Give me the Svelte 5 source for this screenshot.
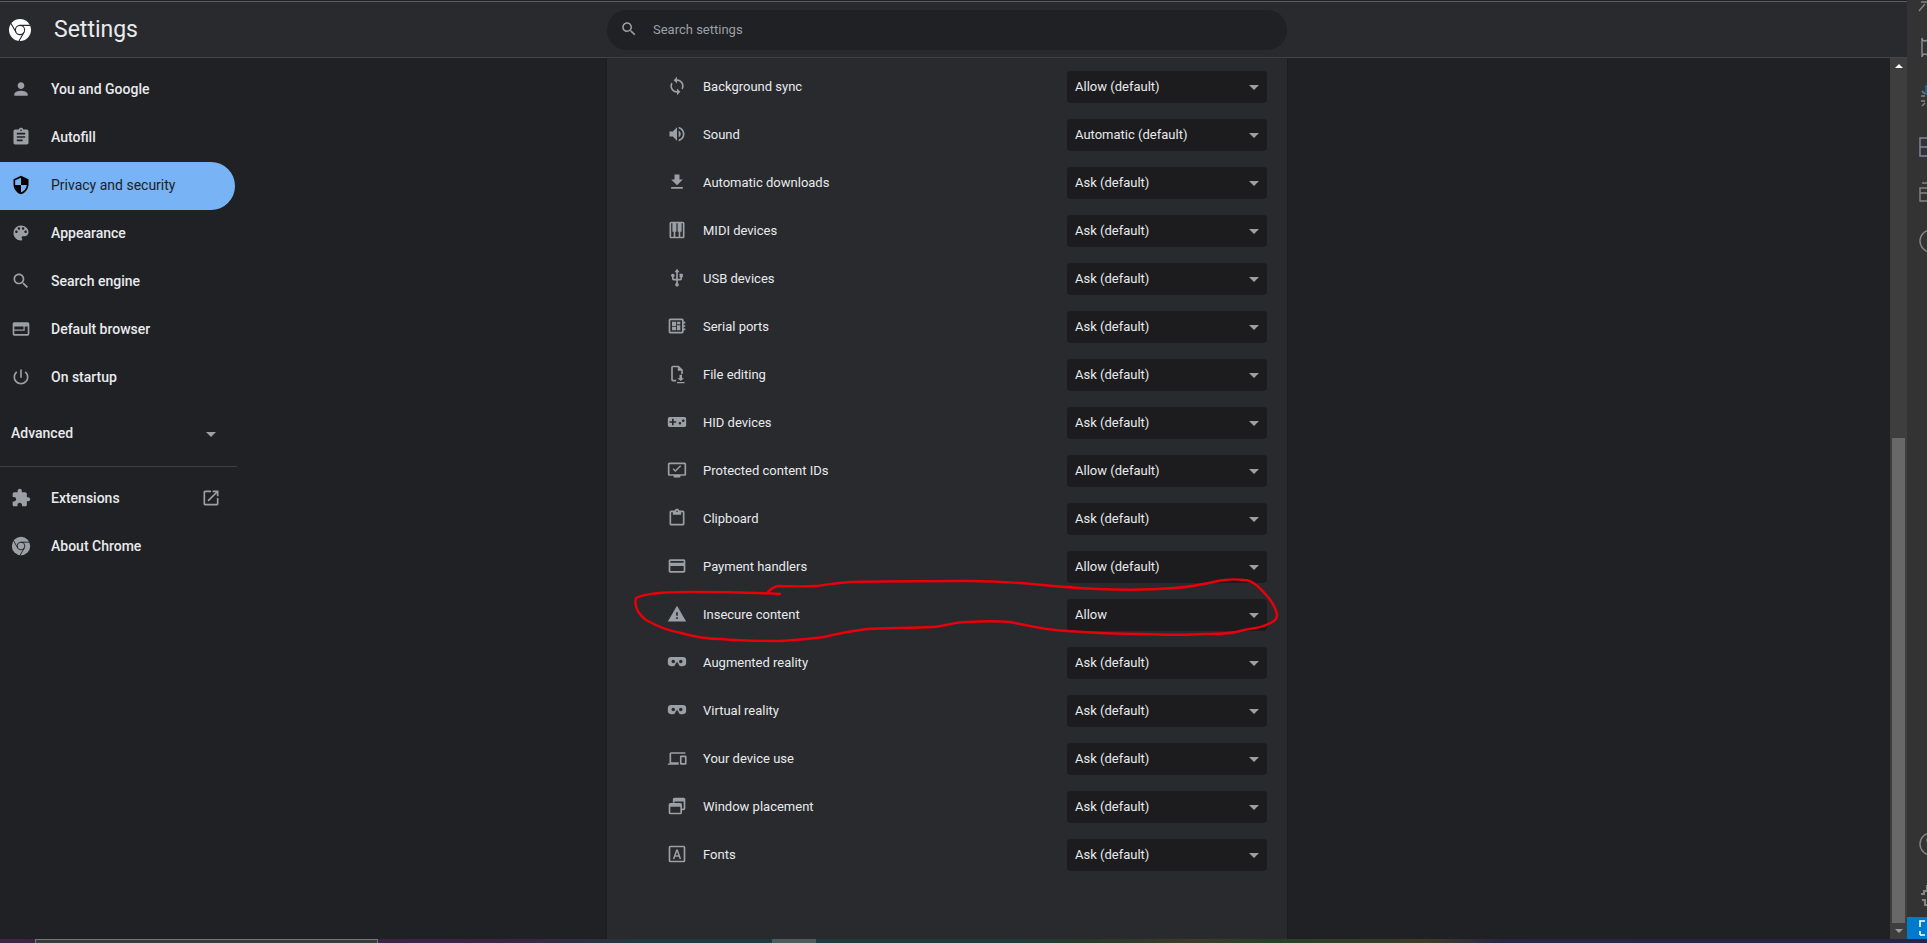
<script lang="ts">
	const paths: Record<string, string> = {
		person: 'M12 12c2.21 0 4-1.79 4-4s-1.79-4-4-4-4 1.79-4 4 1.79 4 4 4zm0 2c-2.67 0-8 1.34-8 4v2h16v-2c0-2.66-5.33-4-8-4z',
		assignment: 'M19 3h-4.18C14.4 1.84 13.3 1 12 1c-1.3 0-2.4.84-2.82 2H5c-1.1 0-2 .9-2 2v14c0 1.1.9 2 2 2h14c1.1 0 2-.9 2-2V5c0-1.1-.9-2-2-2zm-7 0c.55 0 1 .45 1 1s-.45 1-1 1-1-.45-1-1 .45-1 1-1zm2 14H7v-2h7v2zm3-4H7v-2h10v2zm0-4H7V7h10v2z',
		security: 'M12 1L3 5v6c0 5.55 3.84 10.74 9 12 5.16-1.26 9-6.45 9-12V5l-9-4zm0 10.99h7c-.53 4.12-3.28 7.79-7 8.94V12H5V6.3l7-3.11v8.8z',
		palette: 'M12 3c-4.97 0-9 4.03-9 9s4.03 9 9 9c.83 0 1.5-.67 1.5-1.5 0-.39-.15-.74-.39-1.01-.23-.26-.38-.61-.38-.99 0-.83.67-1.5 1.5-1.5H16c2.76 0 5-2.24 5-5 0-4.42-4.03-8-9-8zm-5.5 9c-.83 0-1.5-.67-1.5-1.5S5.67 9 6.5 9 8 9.67 8 10.5 7.33 12 6.5 12zm3-4C8.67 8 8 7.33 8 6.5S8.67 5 9.5 5s1.5.67 1.5 1.5S10.33 8 9.5 8zm5 0c-.83 0-1.5-.67-1.5-1.5S13.67 5 14.5 5s1.5.67 1.5 1.5S15.33 8 14.5 8zm3 4c-.83 0-1.5-.67-1.5-1.5S16.67 9 17.5 9s1.5.67 1.5 1.5-.67 1.5-1.5 1.5z',
		search: 'M15.5 14h-.79l-.28-.27C15.41 12.59 16 11.11 16 9.5 16 5.91 13.09 3 9.5 3S3 5.91 3 9.5 5.91 16 9.5 16c1.61 0 3.09-.59 4.23-1.57l.27.28v.79l5 4.99L20.49 19l-4.99-5zm-6 0C7.01 14 5 11.99 5 9.5S7.01 5 9.5 5 14 7.01 14 9.5 11.99 14 9.5 14z',
		web: 'M4 4h16a2 2 0 012 2v12a2 2 0 01-2 2H4a2 2 0 01-2-2V6a2 2 0 012-2zm0 5v9h16V9zm0 3.5h11V9h1.5v5H4z',
		power: 'M13 3h-2v10h2V3zm4.83 2.17l-1.42 1.42C17.99 7.86 19 9.81 19 12c0 3.87-3.13 7-7 7s-7-3.13-7-7c0-2.19 1.01-4.14 2.58-5.42L6.17 5.17C4.23 6.82 3 9.26 3 12c0 4.97 4.03 9 9 9s9-4.03 9-9c0-2.74-1.23-5.18-3.17-6.83z',
		extension: 'M20.5 11H19V7c0-1.1-.9-2-2-2h-4V3.5C13 2.12 11.88 1 10.5 1S8 2.12 8 3.5V5H4c-1.1 0-1.99.9-1.99 2v3.8H3.5c1.49 0 2.7 1.21 2.7 2.7s-1.21 2.7-2.7 2.7H2V20c0 1.1.9 2 2 2h3.8v-1.5c0-1.49 1.21-2.7 2.7-2.7 1.49 0 2.7 1.21 2.7 2.7V22H17c1.1 0 2-.9 2-2v-4h1.5c1.38 0 2.5-1.12 2.5-2.5S21.88 11 20.5 11z',
		open: 'M19 19H5V5h7V3H5c-1.11 0-2 .9-2 2v14c0 1.1.89 2 2 2h14c1.1 0 2-.9 2-2v-7h-2v7zM14 3v2h3.59l-9.83 9.83 1.41 1.41L19 6.41V10h2V3h-7z',
		sync: 'M12 4V1L8 5l4 4V6c3.31 0 6 2.69 6 6 0 1.01-.25 1.97-.7 2.8l1.46 1.46C19.54 15.03 20 13.57 20 12c0-4.42-3.58-8-8-8zm0 14c-3.31 0-6-2.69-6-6 0-1.01.25-1.97.7-2.8L5.24 7.74C4.46 8.97 4 10.43 4 12c0 4.42 3.58 8 8 8v3l4-4-4-4v3z',
		sound: 'M3 9v6h4l5 5V4L7 9H3zm13.5 3c0-1.77-1.02-3.29-2.5-4.03v8.05c1.48-.73 2.5-2.25 2.5-4.02zM14 3.23v2.06c2.89.86 5 3.54 5 6.71s-2.11 5.85-5 6.71v2.06c4.01-.91 7-4.49 7-8.77s-2.99-7.86-7-8.77z',
		download: 'M19 9h-4V3H9v6H5l7 7 7-7zM5 18v2h14v-2H5z',
		piano: 'M19 2H5c-1.1 0-2 .9-2 2v16c0 1.1.9 2 2 2h14c1.1 0 2-.9 2-2V4c0-1.1-.9-2-2-2zM8 20H5V4h1.5v10H8v6zm6 0h-4v-6h1.25V4h1.5v10H14v6zm5 0h-3v-6h1.5V4H19v16z',
		usb: 'M15 7v4h1v2h-3V5h2l-3-4-3 4h2v8H8v-2.07c.7-.37 1.2-1.08 1.2-1.93 0-1.21-.99-2.2-2.2-2.2-1.21 0-2.2.99-2.2 2.2 0 .85.5 1.56 1.2 1.93V13c0 1.11.89 2 2 2h3v3.05c-.71.37-1.2 1.1-1.2 1.95 0 1.22.99 2.2 2.2 2.2 1.21 0 2.2-.98 2.2-2.2 0-.85-.49-1.58-1.2-1.95V15h3c1.11 0 2-.89 2-2v-2h1V7h-4z',
		serial: 'M22 9V7h-2V5c0-1.1-.9-2-2-2H4c-1.1 0-2 .9-2 2v14c0 1.1.9 2 2 2h14c1.1 0 2-.9 2-2v-2h2v-2h-2v-2h2v-2h-2V9h2zm-4 10H4V5h14v14zM6 13h5v4H6zm6-6h4v3h-4zM6 7h5v5H6zm6 4h4v6h-4z',
		file: 'M7 2h7l5 5v5h-2V8h-4V4H7v15h4v2H7a2 2 0 01-2-2V4a2 2 0 012-2zM15 13h3v4h2.5L16.5 20.5 12.5 17H15zM12 21.5h9V23h-9z',
		gamepad: 'M21 6H3c-1.1 0-2 .9-2 2v8c0 1.1.9 2 2 2h18c1.1 0 2-.9 2-2V8c0-1.1-.9-2-2-2zm-10 7H8v3H6v-3H3v-2h3V8h2v3h3v2zm4.5 2c-.83 0-1.5-.67-1.5-1.5s.67-1.5 1.5-1.5 1.5.67 1.5 1.5-.67 1.5-1.5 1.5zm4-3c-.83 0-1.5-.67-1.5-1.5S18.67 9 19.5 9s1.5.67 1.5 1.5-.67 1.5-1.5 1.5z',
		protected: 'M21 3H3c-1.1 0-2 .9-2 2v12c0 1.1.9 2 2 2h5v2h8v-2h5c1.1 0 2-.9 2-2V5c0-1.1-.9-2-2-2zm0 14H3V5h18v12zM10 14.4l-3.2-3.2 1.2-1.2 2 2 5.8-5.8 1.2 1.2z',
		clipboard: 'M19 3h-4.18C14.4 1.84 13.3 1 12 1s-2.4.84-2.82 2H5c-1.1 0-2 .9-2 2v14c0 1.1.9 2 2 2h14c1.1 0 2-.9 2-2V5c0-1.1-.9-2-2-2zm-7 0c.55 0 1 .45 1 1s-.45 1-1 1-1-.45-1-1 .45-1 1-1zm7 16H5V5h2v3h10V5h2v14z',
		card: 'M20 4H4c-1.11 0-1.99.89-1.99 2L2 18c0 1.11.89 2 2 2h16c1.11 0 2-.89 2-2V6c0-1.11-.89-2-2-2zm0 14H4v-6h16v6zm0-10H4V6h16v2z',
		warning: 'M1 21h22L12 2 1 21zm12-3h-2v-2h2v2zm0-4h-2v-4h2v4z',
		vr: 'M5 6h14a4 4 0 014 4v3a4 4 0 01-4 4h-2.6c-1 0-1.7-.6-2.1-1.4l-1.1-2.4c-.2-.5-.6-.8-1.2-.8s-1 .3-1.2.8l-1.1 2.4c-.4.8-1.1 1.4-2.1 1.4H5a4 4 0 01-4-4v-3a4 4 0 014-4zm2.5 3.4a2.1 2.1 0 100 4.2 2.1 2.1 0 000-4.2zm9 0a2.1 2.1 0 100 4.2 2.1 2.1 0 000-4.2z',
		devices: 'M5 5h17v2H5v10h9v3H1v-1.5h2V7a2 2 0 012-2zM17 9h5a1.5 1.5 0 011.5 1.5v8a1.5 1.5 0 01-1.5 1.5h-5a1.5 1.5 0 01-1.5-1.5v-8A1.5 1.5 0 0117 9zm.5 2v7h4v-7z',
		windows: 'M9 2h11a2 2 0 012 2v11a2 2 0 01-2 2h-2v-2h2V6.5H9V8H7V4a2 2 0 012-2zM4 8.5h12a2 2 0 012 2V20a2 2 0 01-2 2H4a2 2 0 01-2-2v-9.5a2 2 0 012-2zm0 4.5v7h12v-7z',
		fonts: 'M4 2h16a2 2 0 012 2v16a2 2 0 01-2 2H4a2 2 0 01-2-2V4a2 2 0 012-2zm0 2v16h16V4zm7 2.5h2L17 18h-2l-.9-2.6H9.9L9 18H7zm1 2.7l-1.5 4.4h3z'
	};

	const nav = [
		{ icon: 'person', label: 'You and Google' },
		{ icon: 'assignment', label: 'Autofill' },
		{ icon: 'security', label: 'Privacy and security', active: true },
		{ icon: 'palette', label: 'Appearance' },
		{ icon: 'search', label: 'Search engine' },
		{ icon: 'web', label: 'Default browser' },
		{ icon: 'power', label: 'On startup' }
	];

	const rows = [
		{ icon: 'sync', label: 'Background sync', value: 'Allow (default)' },
		{ icon: 'sound', label: 'Sound', value: 'Automatic (default)' },
		{ icon: 'download', label: 'Automatic downloads', value: 'Ask (default)' },
		{ icon: 'piano', label: 'MIDI devices', value: 'Ask (default)' },
		{ icon: 'usb', label: 'USB devices', value: 'Ask (default)' },
		{ icon: 'serial', label: 'Serial ports', value: 'Ask (default)' },
		{ icon: 'file', label: 'File editing', value: 'Ask (default)' },
		{ icon: 'gamepad', label: 'HID devices', value: 'Ask (default)' },
		{ icon: 'protected', label: 'Protected content IDs', value: 'Allow (default)' },
		{ icon: 'clipboard', label: 'Clipboard', value: 'Ask (default)' },
		{ icon: 'card', label: 'Payment handlers', value: 'Allow (default)' },
		{ icon: 'warning', label: 'Insecure content', value: 'Allow' },
		{ icon: 'vr', label: 'Augmented reality', value: 'Ask (default)' },
		{ icon: 'vr', label: 'Virtual reality', value: 'Ask (default)' },
		{ icon: 'devices', label: 'Your device use', value: 'Ask (default)' },
		{ icon: 'windows', label: 'Window placement', value: 'Ask (default)' },
		{ icon: 'fonts', label: 'Fonts', value: 'Ask (default)' }
	];

	const scribble =
		'M780 594C760 593 720 592 690 592C665 592 645 593 636 598C634 606 637 613 646 620C660 628 670 631 681 633C695 637 708 639 720 639C745 641 762 641 780 641C795 640 810 639 824 637C840 633 852 631 867 629C890 628 915 628 932 627C945 626 955 622 967 622C985 621 998 621 1010 622C1030 626 1045 630 1067 631C1095 633 1120 634 1140 634C1165 635 1190 635 1205 634C1220 634 1230 634 1240 631C1252 628 1260 628 1266 625C1273 622 1277 620 1277 615C1276 608 1272 602 1268 597C1260 588 1253 580 1244 580C1235 579 1227 579 1218 581C1205 584 1190 587 1175 588C1150 590 1120 590 1097 589C1075 588 1052 586 1032 584C1010 582 990 581 967 581C925 581 890 581 850 582C835 583 825 585 815 586C803 587 790 586 778 586C772 587 770 590 767 593';
</script>

{#snippet chrome(color: string, cut: string)}
	<svg viewBox="0 0 24 24" class="chrome">
		<circle cx="12" cy="12" r="11" fill={color} />
		<circle cx="12" cy="12" r="4.6" fill="none" stroke={cut} stroke-width="1.1" />
		<path d="M12 7.4H22M8 14.3L3 5.6M16 14.3L11 23" stroke={cut} stroke-width="1.1" fill="none" />
	</svg>
{/snippet}

{#snippet icon(name: string)}
	<svg viewBox="0 0 24 24" class="icon"><path fill-rule="evenodd" d={paths[name]} /></svg>
{/snippet}

<div class="window">
	<div class="top">
		<div class="page">
			<header class="toolbar">
				<div class="brand">
					<span class="logo">{@render chrome('#ffffff', '#292a2d')}</span>
					<h1>Settings</h1>
				</div>
				<div class="search">
					{@render icon('search')}
					<span>Search settings</span>
				</div>
			</header>

			<div class="body">
				<nav class="sidebar">
					{#each nav as item}
						<div class="nav-item" class:active={item.active}>
							<span class="nav-icon">{@render icon(item.icon)}</span>
							<span class="nav-label">{item.label}</span>
						</div>
					{/each}
					<div class="advanced">
						<span class="nav-label">Advanced</span>
						<i class="caret"></i>
					</div>
					<div class="divider"></div>
					<div class="nav-item">
						<span class="nav-icon">{@render icon('extension')}</span>
						<span class="nav-label grow">Extensions</span>
						<span class="external">{@render icon('open')}</span>
					</div>
					<div class="nav-item">
						<span class="nav-icon">{@render chrome('#9aa0a6', '#202124')}</span>
						<span class="nav-label">About Chrome</span>
					</div>
				</nav>

				<main class="card">
					{#each rows as row}
						<div class="row">
							<span class="row-icon">{@render icon(row.icon)}</span>
							<span class="row-label">{row.label}</span>
							<div class="select">
								<span class="select-value">{row.value}</span>
								<i class="caret"></i>
							</div>
						</div>
					{/each}
				</main>

				<div class="spacer"></div>

				<div class="scrollbar">
					<i class="arrow up"></i>
					<div class="thumb"></div>
					<i class="arrow down"></i>
				</div>
			</div>
		</div>

		<aside class="activity">
			<svg class="activity-icons" viewBox="0 0 20 917" fill="none" stroke="#858585" stroke-width="1.4">
				<path d="M12 11L18 4M14 2H20" />
				<path d="M15 38a3 3 0 106 0v19a3 3 0 10-6 0z" stroke="#8a8f99" />
				<path d="M14 96h4M14 101h4M15 91l3 3M15 106l3-3" />
				<path d="M19 86h3v8h-3z" stroke="#2f6f9f" />
				<path d="M13 138h10v18H13zM13 147h10" stroke="#8387a8" />
				<path d="M13 188h10v13H13zM13 193h10M15 183h8" />
				<circle cx="24" cy="241" r="11" />
				<circle cx="24" cy="844" r="11" />
				<path d="M20 840a4 4 0 108 0a4 4 0 10-8 0" />
				<path d="M14 894h3v-3h3v-5h6v5M15 900h3v5h8" stroke-width="2" />
			</svg>
			<div class="remote">
				<svg viewBox="0 0 20 22" fill="none" stroke="#ffffff" stroke-width="1.6"><path d="M18 4h-5v6M13 18h5M13 14v4" /></svg>
			</div>
		</aside>
	</div>

	<footer class="strip">
		<div class="strip-window"></div>
		<div class="strip-tab"></div>
	</footer>

	<svg class="scribble" viewBox="0 0 1927 943">
		<path d={scribble} fill="none" stroke="#e8000b" stroke-width="2.4" stroke-linecap="round" />
	</svg>
</div>

<style>
	:global(body) {
		margin: 0;
		background: #202124;
	}

	.window {
		position: relative;
		display: flex;
		flex-direction: column;
		height: 943px;
		overflow: hidden;
		font-family: Roboto, 'Liberation Sans', sans-serif;
		font-size: 13px;
		color: #e8eaed;
	}

	.top {
		flex: 1;
		display: flex;
		min-height: 0;
	}

	.page {
		flex: 1;
		display: flex;
		flex-direction: column;
		min-width: 0;
	}

	.toolbar {
		display: flex;
		align-items: center;
		box-sizing: border-box;
		height: 58px;
		background: #292a2d;
		border-top: 1px solid #202124;
		border-bottom: 1px solid #45464a;
		box-shadow: inset 0 1px 0 #5c5d60;
		padding-top: 2px;
	}

	.brand {
		display: flex;
		align-items: center;
		width: 607px;
		flex: none;
	}

	.logo {
		display: flex;
		width: 24px;
		height: 24px;
		margin-left: 8px;
		margin-right: 22px;
	}

	h1 {
		margin: 0 0 2px;
		font-size: 23px;
		font-weight: 400;
		color: #e8eaed;
	}

	.search {
		display: flex;
		align-items: center;
		gap: 15px;
		box-sizing: border-box;
		width: 680px;
		height: 40px;
		padding: 0 0 2px 13px;
		border-radius: 20px;
		background: #202124;
		color: #9aa0a6;
	}

	.search .icon {
		width: 18px;
		height: 18px;
	}

	.icon {
		display: block;
		width: 100%;
		height: 100%;
		fill: #9aa0a6;
	}

	.chrome {
		display: block;
		width: 100%;
		height: 100%;
	}

	.body {
		flex: 1;
		display: flex;
		min-height: 0;
	}

	.sidebar {
		width: 607px;
		flex: none;
		box-sizing: border-box;
		padding-top: 8px;
	}

	.nav-item {
		display: flex;
		align-items: center;
		box-sizing: border-box;
		width: 235px;
		height: 48px;
		padding-left: 11px;
		border-radius: 0 24px 24px 0;
		font-size: 14px;
		font-weight: 500;
		color: #e8eaed;
	}

	.nav-label {
		padding-bottom: 2px;
	}

	.nav-item.active {
		background: #78b4f5;
		color: #202124;
		font-weight: 400;
	}

	.nav-item.active .icon {
		fill: #000000;
	}

	.nav-icon {
		display: block;
		width: 20px;
		height: 20px;
		margin: 0 20px 2px 0;
	}

	.grow {
		flex: 1;
	}

	.external {
		display: block;
		width: 20px;
		height: 20px;
		margin: 0 14px 2px 0;
	}

	.advanced {
		display: flex;
		align-items: center;
		justify-content: space-between;
		box-sizing: border-box;
		width: 235px;
		height: 48px;
		margin-top: 8px;
		padding: 0 19px 0 11px;
		font-size: 14px;
		font-weight: 500;
	}

	.divider {
		width: 237px;
		height: 1px;
		margin-top: 8px;
		margin-bottom: 8px;
		background: #3f4043;
	}

	.caret {
		display: block;
		width: 0;
		height: 0;
		border-left: 5px solid transparent;
		border-right: 5px solid transparent;
		border-top: 5px solid #9aa0a6;
	}

	.card {
		width: 680px;
		flex: none;
		box-sizing: border-box;
		padding: 5px 20px 0 60px;
		background: #292a2d;
		box-shadow: 0 0 2px rgba(0, 0, 0, 0.3);
	}

	.row {
		display: flex;
		align-items: center;
		height: 48px;
	}

	.row-icon {
		display: block;
		width: 20px;
		height: 20px;
		margin: 0 16px 2px 0;
	}

	.row-label {
		flex: 1;
		padding-bottom: 2px;
		color: #e8eaed;
	}

	.select {
		display: flex;
		align-items: center;
		justify-content: space-between;
		box-sizing: border-box;
		width: 200px;
		height: 32px;
		padding: 0 8px;
		border-radius: 4px;
		background: #1c1c1e;
		color: #e8eaed;
	}

	.select-value {
		padding-bottom: 2px;
	}

	.spacer {
		flex: 1;
	}

	.scrollbar {
		display: flex;
		flex-direction: column;
		align-items: center;
		justify-content: space-between;
		width: 17px;
		flex: none;
		background: #3e3e3e;
		position: relative;
	}

	.arrow {
		display: block;
		width: 0;
		height: 0;
		border-left: 4px solid transparent;
		border-right: 4px solid transparent;
	}

	.arrow.up {
		margin-top: 6px;
		border-bottom: 4px solid #ffffff;
	}

	.arrow.down {
		margin-bottom: 6px;
		border-top: 4px solid #9a9a9a;
	}

	.thumb {
		width: 13px;
		height: 485px;
		margin-top: auto;
		margin-bottom: 6px;
		background: #686868;
	}

	.activity {
		display: flex;
		flex-direction: column;
		width: 20px;
		flex: none;
		background: #333333;
		overflow: hidden;
	}

	.activity-icons {
		display: block;
		width: 20px;
		height: 917px;
		flex: none;
	}

	.remote {
		height: 22px;
		background: #007acc;
	}

	.remote svg {
		display: block;
		width: 20px;
		height: 22px;
	}

	.strip {
		display: flex;
		align-items: stretch;
		flex: none;
		height: 4px;
		padding-left: 35px;
		background: linear-gradient(
			90deg,
			#3f2540 0,
			#3d2444 24%,
			#3c2640 27%,
			#1f3a3d 34%,
			#1f3a3a 52%,
			#27392c 56%,
			#3f3a2a 62%,
			#26402a 66%,
			#403a2a 74%,
			#2a2540 78%,
			#2a2444 100%
		);
	}

	.strip-window {
		width: 343px;
		box-sizing: border-box;
		background: #3a3a3a;
		border: 1px solid #777777;
		border-bottom: none;
	}

	.strip-tab {
		width: 44px;
		margin-left: 394px;
		background: #4d5c5a;
	}

	.scribble {
		position: absolute;
		inset: 0;
		width: 1927px;
		height: 943px;
		pointer-events: none;
	}
</style>
